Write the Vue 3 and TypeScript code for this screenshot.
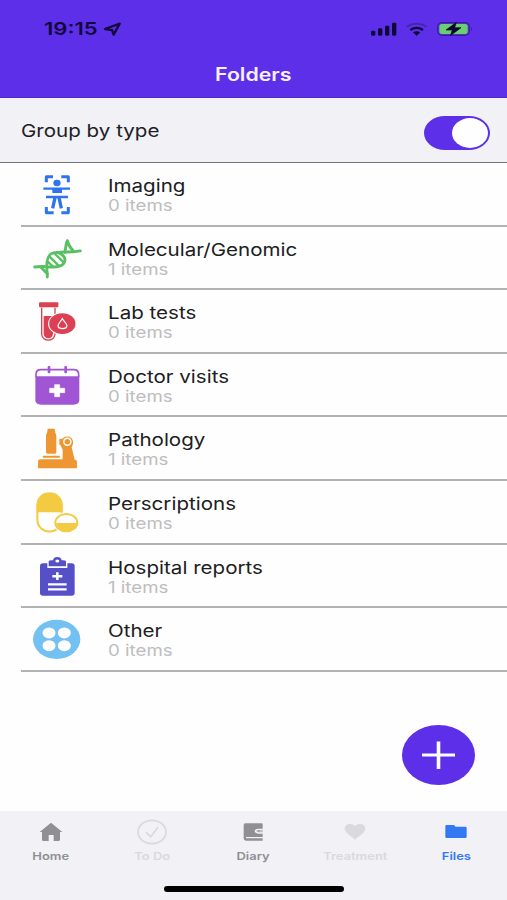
<script setup lang="ts">
import { ref } from 'vue'

interface Folder {
  id: string
  name: string
  count: number
}

interface Tab {
  id: string
  label: string
  state: 'normal' | 'disabled' | 'active'
}

const grouped = ref(true)

const folders: Folder[] = [
  { id: 'imaging', name: 'Imaging', count: 0 },
  { id: 'genomic', name: 'Molecular/Genomic', count: 1 },
  { id: 'lab', name: 'Lab tests', count: 0 },
  { id: 'doctor', name: 'Doctor visits', count: 0 },
  { id: 'pathology', name: 'Pathology', count: 1 },
  { id: 'pills', name: 'Perscriptions', count: 0 },
  { id: 'hospital', name: 'Hospital reports', count: 1 },
  { id: 'other', name: 'Other', count: 0 },
]

const tabs: Tab[] = [
  { id: 'home', label: 'Home', state: 'normal' },
  { id: 'todo', label: 'To Do', state: 'disabled' },
  { id: 'diary', label: 'Diary', state: 'normal' },
  { id: 'treatment', label: 'Treatment', state: 'disabled' },
  { id: 'files', label: 'Files', state: 'active' },
]
</script>

<template>
  <div class="screen">
    <header class="top">
      <div class="status">
        <span class="wide time">19:15</span>
        <svg class="locate" viewBox="0 0 54 44">
          <path d="M6 21 L50 5 L32 38 L27 24 Z" fill="none" stroke="#12083f" stroke-width="7" stroke-linejoin="round" />
        </svg>
        <svg class="signals" viewBox="0 0 312 48">
          <g fill="#0d0636">
            <rect x="3" y="29" width="13" height="15" rx="4" />
            <rect x="24" y="22" width="13" height="22" rx="4" />
            <rect x="45" y="14" width="13" height="30" rx="4" />
            <rect x="66" y="5" width="13" height="39" rx="4" />
            <path d="M129 34 Q140 27 151 34 L140 44 Z" />
          </g>
          <path d="M121 27 Q140 14 159 27" fill="none" stroke="#0d0636" stroke-width="7" />
          <path d="M110 17 Q140 -1 170 17" fill="none" stroke="#0d0636" stroke-opacity=".3" stroke-width="5" />
          <rect x="203" y="5" width="95" height="38" rx="13" fill="none" stroke="#38208f" stroke-width="3.5" />
          <path d="M303 18 Q309 24 303 30 Z" fill="#38208f" />
          <rect x="208" y="9" width="85" height="30" rx="8" fill="#69cf70" />
          <path d="M259 4 L228 27 H247 L241 44 L273 20 H254 Z" fill="#0a0530" stroke="#0a0530" stroke-width="2" />
        </svg>
      </div>
      <h1 class="title"><span class="wide">Folders</span></h1>
    </header>

    <section class="group">
      <span class="wide group-label">Group by type</span>
      <button class="switch" :class="{ on: grouped }" aria-label="Group by type" @click="grouped = !grouped">
        <span class="knob"></span>
      </button>
    </section>

    <main class="list">
      <div v-for="f in folders" :key="f.id" class="row">
        <svg class="icon" viewBox="0 0 240 184">
          <g v-if="f.id === 'imaging'" transform="translate(0 6)" fill="none" stroke="#2f74ee" stroke-width="9">
            <path d="M79 52 V35 H99 M124 35 H145 V52 M79 126 V143 H101 M124 143 H145 V126" stroke-linejoin="round" />
            <ellipse cx="111" cy="54" rx="11" ry="9.500" fill="#2f74ee" stroke="none" />
            <path d="M70 71 H150 M78 96 H144" stroke-width="7" />
            <path d="M97 70 H126 V84 H97 Z" fill="#2f74ee" stroke="none" />
            <path d="M105 98 L98 130 M117 98 L124 130" stroke-width="10" />
          </g>
          <g v-else-if="f.id === 'genomic'" transform="translate(0 -185)" fill="none" stroke="#58bf62" stroke-width="8.500" stroke-linecap="round">
            <path d="M44 305 C67 302 74 303 86 305 C115 307 134 301 135 284 C135 274 126 266 112 261" />
            <path d="M82 335 C82 320 79 310 81 291 C83 269 92 261 112 261 C135 258 153 263 181 257" />
            <path d="M142 226 C136 239 138 250 134 261 M142 226 C145 240 153 250 160 257" />
            <path d="M62 305 L82 325" />
            <path d="M91 276 L116 301 M105 266 L132 292 M83 289 L99 304" stroke-width="7" />
          </g>
          <g v-else-if="f.id === 'lab'">
            <path d="M65 53 V133 C67 156 103 156 105 133 V53" fill="none" stroke="#dc4052" stroke-width="4" />
            <rect x="57" y="37" width="58" height="15" rx="3" fill="#dc4052" />
            <path d="M71 78 H99 V132 C97 149 73 149 71 132 Z" fill="#dc4052" />
            <ellipse cx="127" cy="101" rx="43" ry="34" fill="#fefefe" />
            <ellipse cx="127" cy="101" rx="39.500" ry="31" fill="#dc4052" />
            <path d="M127 86 C120 97 114 102 114 107 C115 119 140 119 141 107 C141 102 134 97 127 86 Z" fill="none" stroke="#fefefe" stroke-width="3.500" />
          </g>
          <g v-else-if="f.id === 'doctor'" transform="translate(0 -191)">
            <path d="M48 260 V252 Q48 238 63 238 H161 Q176 238 176 252 V260" fill="none" stroke="#a056d4" stroke-width="5" />
            <path d="M46 258 H178 V330 Q177 343 161 343 H63 Q47 343 46 330 Z" fill="#a056d4" />
            <rect x="83" y="227" width="8" height="22" rx="3" fill="#a056d4" />
            <rect x="133" y="227" width="8" height="22" rx="3" fill="#a056d4" />
            <path d="M104 283 H119 V294 H134 V307 H119 V319 H104 V307 H89 V294 H104 Z" fill="#fefefe" stroke="#fefefe" stroke-width="2" stroke-linejoin="round" />
          </g>
          <g v-else-if="f.id === 'pathology'" transform="translate(0 -7)" fill="#ee9732">
            <path d="M83 42 H104 L106 55 Q109 58 109 64 V113 Q109 117 104 117 H83 Q78 117 78 113 V64 Q78 58 81 55 Z" />
            <rect x="68" y="123" width="52" height="6" rx="3" />
            <path d="M54 141 Q54 134 62 134 H128 V105 L121 90 H118 V72 H127 Q135 63 148 66 Q162 73 159 88 L155 98 L164 135 Q171 135 171 142 V161 H54 Z" />
            <circle cx="142" cy="81" r="10.500" fill="none" stroke="#fefefe" stroke-width="4.500" />
          </g>
          <g v-else-if="f.id === 'pills'" transform="translate(0 -198)">
            <path d="M52 290 V271 C53 223 124 223 125 271 V314 C124 361 53 361 52 314 Z" fill="#fefefe" stroke="#f3cb42" stroke-width="6" />
            <path d="M50 292 V270 C51 222 127 222 128 270 V292 Z" fill="#f3cb42" />
            <ellipse cx="139" cy="323" rx="38" ry="32" fill="#fefefe" />
            <ellipse cx="139" cy="323" rx="33" ry="26" fill="#fefefe" stroke="#f3cb42" stroke-width="6" />
            <path d="M109 324 H170 C166 357 113 357 109 324 Z" fill="#f3cb42" />
          </g>
          <g v-else-if="f.id === 'hospital'" transform="translate(0 1)">
            <path d="M60 62 Q60 54 69 54 H82 V68 H142 V54 H155 Q164 54 164 62 V143 Q164 151 155 151 H69 Q60 151 60 143 Z" fill="#5550c8" />
            <path d="M86 63 V48 Q87 45 95 45 H99 Q101 35 112 35 Q123 35 125 45 H129 Q137 45 138 48 V63 Z" fill="#5550c8" />
            <ellipse cx="112" cy="47" rx="6" ry="4.500" fill="#fefefe" />
            <path d="M112 81 V104 M97 92.500 H127" fill="none" stroke="#fefefe" stroke-width="7.500" />
            <path d="M84 117 H140 M84 132 H140" fill="none" stroke="#fefefe" stroke-width="7" />
          </g>
          <g v-else transform="translate(0 -190)">
            <ellipse cx="110" cy="284" rx="71" ry="59" fill="#73c0f2" />
            <g fill="#fefefe">
              <ellipse cx="87" cy="265" rx="19.500" ry="16.500" />
              <ellipse cx="133" cy="265" rx="19.500" ry="16.500" />
              <ellipse cx="87" cy="303" rx="19.500" ry="16.500" />
              <ellipse cx="133" cy="303" rx="19.500" ry="16.500" />
            </g>
          </g>
        </svg>
        <div class="text">
          <span class="wide name">{{ f.name }}</span>
          <span class="wide count">{{ f.count }} items</span>
        </div>
      </div>
    </main>

    <button class="fab" aria-label="Add">
      <svg viewBox="0 0 73 60">
        <path d="M36.500 16.500 V44" stroke="#fff" stroke-width="3.600" />
        <path d="M20 30 H53" stroke="#fff" stroke-width="3" />
      </svg>
    </button>

    <nav class="tabs">
      <div class="tab-row">
        <div v-for="t in tabs" :key="t.id" class="tab" :class="t.state">
          <svg class="tab-icon" viewBox="0 0 96 84" fill="currentColor">
            <path v-if="t.id === 'home'" d="M48 14 L82 42 H75 V65 Q75 69 70 69 H56 V51 H41 V69 H26 Q21 69 21 65 V42 H14 Z" />
            <g v-else-if="t.id === 'todo'" fill="none" stroke="currentColor" stroke-width="5">
              <ellipse cx="48" cy="42" rx="42" ry="35" />
              <path d="M30 43 L44 56 L66 28" />
            </g>
            <g v-else-if="t.id === 'diary'">
              <path d="M25 16 H74 Q77 16 77 19 V32 H64 Q53 33 53 39 Q53 46 64 47 H77 V57 H27 V61 H77 V68 H27 Q20 68 20 61 V22 Q20 16 25 16 Z" />
              <path d="M64 36 H77 V43 H64 Q58 42 58 39 Q59 36 64 36 Z" opacity=".55" />
              <circle cx="65" cy="39" r="2.500" />
            </g>
            <path v-else-if="t.id === 'treatment'" d="M48 65 C40 56 17 46 17 31 C18 17 40 14 48 25 C56 14 78 17 79 31 C79 46 56 56 48 65 Z" />
            <path v-else d="M16 20 Q16 16 20 16 H40 Q44 16 47 21 H76 Q80 21 80 25 V51 Q80 55 76 55 H20 Q16 55 16 51 Z" transform="translate(0 5)" />
          </svg>
          <span class="wide tab-label">{{ t.label }}</span>
        </div>
      </div>
      <div class="home-bar"></div>
    </nav>
  </div>
</template>

<style>
body {
  margin: 0;
  background: #fefefe;
}
</style>

<style scoped>
.screen {
  position: relative;
  display: flex;
  flex-direction: column;
  width: 507px;
  height: 900px;
  overflow: hidden;
  background: #fefefe;
  font-family: Inter, 'Liberation Sans', sans-serif;
  color: #202022;
}

/* The whole interface uses horizontally widened lettering. */
.wide {
  display: inline-block;
  white-space: nowrap;
  transform: scaleX(1.175);
  transform-origin: left center;
}

.top {
  box-sizing: border-box;
  height: 98px;
  flex: none;
  background: #5d2fe9;
  border-bottom: 1px solid #4e28cb;
}

.status {
  display: flex;
  align-items: flex-start;
  height: 65px;
  padding-left: 44px;
  box-sizing: border-box;
}

.time {
  width: 59px;
  padding-top: 19px;
  font-size: 17.500px;
  font-weight: 600;
  line-height: 20px;
  color: #12083f;
  transform: scaleX(1.26);
}

.locate {
  width: 18px;
  height: 14.700px;
  margin-top: 21.500px;
}

.signals {
  width: 104px;
  height: 16px;
  margin: 20.500px 0 0 249px;
}

.title {
  margin: 0;
  font-size: 18px;
  font-weight: 600;
  line-height: 20px;
  text-align: center;
  color: #f6f0ff;
}

.title .wide {
  transform: scaleX(1.185);
  transform-origin: center;
}

.group {
  box-sizing: border-box;
  display: flex;
  justify-content: space-between;
  align-items: flex-start;
  flex: none;
  height: 65px;
  padding: 18px 17px 0 21px;
  background: #f1f1f6;
  border-bottom: 1px solid #747476;
}

.group-label {
  margin-top: 4px;
  font-size: 17.500px;
  line-height: 22px;
}

.switch {
  display: flex;
  justify-content: flex-end;
  box-sizing: border-box;
  width: 66px;
  height: 34px;
  margin: 0;
  padding: 2px;
  border: 0;
  border-radius: 21px / 17px;
  background: #5d2fe9;
}

.switch:not(.on) {
  justify-content: flex-start;
  background: #d8d8dc;
}

.knob {
  width: 36px;
  height: 30px;
  border-radius: 50%;
  background: #fefefe;
}

.list {
  flex: 1;
}

.row {
  box-sizing: border-box;
  display: flex;
  height: 63.600px;
  margin-left: 20.500px;
  border-bottom: 2px solid #b2b2b3;
}

.icon {
  flex: none;
  width: 80px;
  height: 61.300px;
  margin-left: -1px;
}

.text {
  display: flex;
  flex-direction: column;
  align-items: flex-start;
  padding: 13.100px 0 0 8px;
}

.name {
  font-size: 17.500px;
  line-height: 20px;
}

.count {
  font-size: 15.500px;
  line-height: 20px;
  color: #bdbdbf;
  transform: scaleX(1.205);
}

.fab {
  position: absolute;
  left: 402px;
  top: 725px;
  width: 73px;
  height: 60px;
  padding: 0;
  border: 0;
  border-radius: 50%;
  background: #5d2fe9;
}

.fab svg {
  display: block;
  width: 73px;
  height: 60px;
}

.tabs {
  flex: none;
  height: 89px;
  background: #f1f1f6;
}

.tab-row {
  display: grid;
  grid-template-columns: repeat(5, 1fr);
  height: 75px;
}

.tab {
  display: flex;
  flex-direction: column;
  align-items: center;
  padding-top: 7px;
  color: #8f8f94;
}

.tab.disabled {
  color: #d9d9de;
}

.tab.active {
  color: #3478f4;
}

.tab-icon {
  width: 32px;
  height: 28px;
}

.tab-label {
  margin-top: 3px;
  font-size: 11px;
  font-weight: 600;
  line-height: 14px;
  transform-origin: center;
}

.home-bar {
  width: 180px;
  height: 5.500px;
  margin: 0 auto;
  border-radius: 3px;
  background: #000;
}
</style>
